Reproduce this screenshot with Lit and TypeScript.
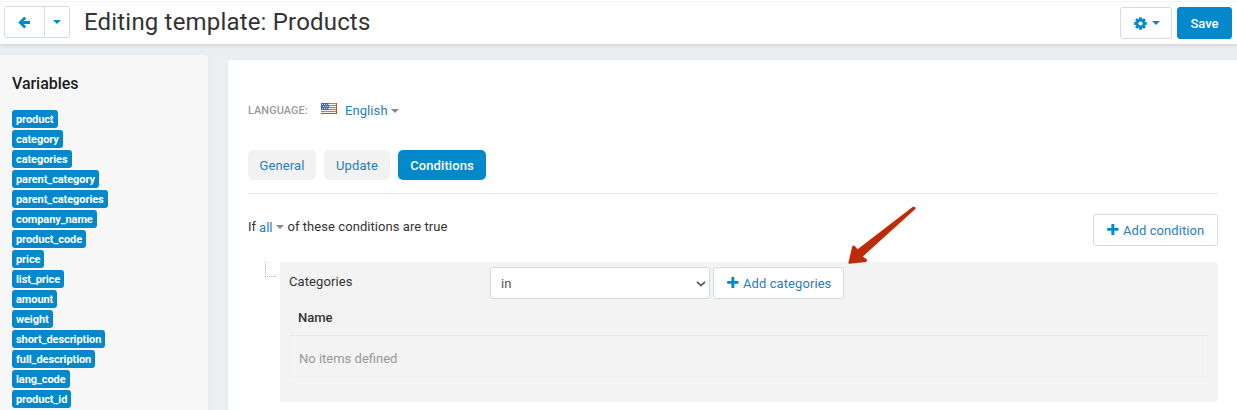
import { LitElement, html, css, svg } from "lit";
import { customElement } from "lit/decorators.js";

const variables = [
  "product", "category", "categories", "parent_category", "parent_categories",
  "company_name", "product_code", "price", "list_price", "amount", "weight",
  "short_description", "full_description", "lang_code", "product_id",
];

const plus = html`<svg class="plus" width="12" height="12" viewBox="0 0 12 12">
  <path d="M4.4 0h2.9v4h4.2v2.8H7.3v4.2H4.4V6.8H0.2V4h4.2z" fill="#0388cc" />
</svg>`;

const teeth = [0, 45, 90, 135].map(
  (a) => svg`<rect x="4.8" y="0.2" width="2.8" height="12" rx=".5" transform="rotate(${a} 6.2 6.2)"/>`
);

@customElement("app-root")
export class AppRoot extends LitElement {
  static styles = css`
    :host {
      display: block;
      height: 410px;
      overflow: hidden;
      position: relative;
      background: #ebeff2;
      font: 13px/20px Roboto, "Liberation Sans", sans-serif;
      color: #333;
      white-space: nowrap;
    }
    * { box-sizing: border-box; }
    svg { display: block; flex: none; }
    .header {
      height: 44px;
      display: flex;
      align-items: flex-start;
      padding: 6px 5px 0 4px;
      background: linear-gradient(#fff 1px, #f4f4f4 1px, #f4f4f4 2px, #fff 2px);
      box-shadow: 0 1px 5px rgba(0, 0, 0, 0.14);
      position: relative;
    }
    .btn {
      display: flex;
      align-items: center;
      height: 32px;
      border: 1px solid #d3dbe1;
      border-radius: 3px;
      background: #fff;
      color: #2a7dbb;
    }
    .back { width: 66px; }
    .back-arrow { width: 40px; height: 30px; border-right: 1px solid #d3dbe1; padding: 10px 0 0 13px; }
    .back-caret { padding-left: 8px; }
    .title { margin: 0 auto 0 14px; font-size: 24px; line-height: 32px; font-weight: 400; letter-spacing: 0.18px; }
    .tools { width: 52px; margin: 1px 5px 0 0; padding-left: 13px; gap: 5px; }
    .save {
      width: 55px;
      margin-top: 1px;
      padding-top: 1px;
      justify-content: center;
      border-color: #0388cc;
      background: #0388cc;
      color: #fff;
      font-weight: 500;
    }
    .body { display: flex; height: 366px; }
    .sidebar {
      width: 208px;
      height: 370px;
      margin-top: 11px;
      padding: 19px 12px 0;
      background: #f7f7f7;
      border-radius: 0 3px 0 0;
      box-shadow: 0 0 3px rgba(0, 0, 0, 0.05);
    }
    .sidebar-title { margin: 0 0 16px; font-size: 16px; line-height: 20px; font-weight: 500; color: #1c1c1c; letter-spacing: -0.05px; }
    .tags { display: flex; flex-direction: column; align-items: flex-start; gap: 2px; }
    .tag {
      height: 18px;
      padding: 0 4px;
      border-radius: 3px;
      background: #0388cc;
      color: #fff;
      font-size: 11px;
      line-height: 19px;
      font-weight: 700;
      letter-spacing: -0.08px;
    }
    .main {
      width: 1009px;
      height: 370px;
      margin: 16px 0 0 20px;
      padding: 41px 19px 0 20px;
      background: #fff;
      border-radius: 3px 0 0 0;
      box-shadow: 0 0 3px rgba(0, 0, 0, 0.05);
    }
    .language { display: flex; align-items: center; height: 20px; }
    .language-label { width: 73px; font-size: 11px; font-weight: 500; color: #999; }
    .flag { margin-top: -5px; }
    .link { color: #2a7dbb; }
    .language-link { margin: 0 3px 0 8px; letter-spacing: 0.08px; }
    .tabs { display: flex; gap: 8px; margin-top: 29px; }
    .tab {
      display: flex;
      justify-content: center;
      height: 30px;
      line-height: 31px;
      border-radius: 5px;
      background: #f2f2f2;
      color: #2a7dbb;
      letter-spacing: 0.08px;
    }
    .general { width: 68px; }
    .update { width: 66px; }
    .active { width: 88px; background: #0388cc; color: #fff; font-weight: 500; }
    .rule { height: 1px; margin-top: 13px; background: #e1e5e8; }
    .condition-head { display: flex; justify-content: space-between; padding-top: 20px; }
    .sentence { display: flex; align-items: center; height: 26px; }
    .all { margin: 1px 4px 0 3px; }
    .of { margin-left: 3px; letter-spacing: 0.06px; }
    .add-condition { width: 125px; padding: 0 0 0 13px; gap: 4px; }
    .add-label { padding-top: 2px; letter-spacing: 0.08px; }
    .tree { display: flex; margin-top: 16px; padding-left: 17px; }
    .elbow { width: 11px; height: 15px; margin-right: 4px; border: dotted #b5b5b5; border-width: 0 0 1px 1px; }
    .group { width: 938px; height: 140px; padding: 5px 10px 0; border-radius: 3px; background: #f3f3f3; }
    .controls { display: flex; }
    .name { width: 201px; margin-left: -1px; padding: 5px 0 0; line-height: 20px; letter-spacing: 0.1px; }
    .select { width: 220px; margin-right: 3px; justify-content: space-between; padding: 1px 3px 0 10px; color: #555; }
    .add-categories { width: 131px; padding-left: 13px; gap: 4px; }
    .table-head { height: 37px; padding: 9px 8px 0; border-bottom: 1px solid #e8e8e8; font-weight: 500; }
    .empty { height: 41px; padding: 13px 8px 0; border: 1px solid #f0f0f0; border-top: 0; color: #999; }
    .pointer { position: absolute; left: 840px; top: 200px; }
  `;

  private caret(color: string) {
    return html`<svg width="8" height="4" viewBox="0 0 8 4"><path d="M0 0h8L4 4z" fill=${color} /></svg>`;
  }

  private flag() {
    return html`<svg class="flag" width="16" height="11" viewBox="0 0 16 11">
      <path d="M0 0h16v11H0z" fill="#fbeeea" />
      <path d="M0 .5h16M0 2.5h16M0 4.5h16M0 6.5h16M0 8.5h16" stroke="#e2685c" />
      <path d="M0 10.5h16M15.5 0v11" stroke="#c4473f" />
      <path d="M0 0h8v7H0z" fill="#3e6bcb" />
      <path d="M1 1.5h7M2 3.5h6M1 5.5h7" stroke="#c4d3f5" stroke-dasharray="1 1" />
    </svg>`;
  }

  render() {
    return html`
      <header class="header">
        <div class="btn back">
          <span class="back-arrow">
            <svg width="13" height="12" viewBox="0 0 13 12">
              <path d="M7.2 .6 2.2 5.5 7.2 10.4M2.6 5.5H12" fill="none" stroke="#0388cc" stroke-width="2.8" />
            </svg>
          </span>
          <span class="back-caret">${this.caret("#0388cc")}</span>
        </div>
        <h1 class="title">Editing template: Products</h1>
        <div class="btn tools">
          <svg width="13" height="13" viewBox="0 0 12.4 12.4" fill="#0388cc">
            ${teeth}
            <circle cx="6.2" cy="6.2" r="4.5" />
            <circle cx="6.2" cy="6.2" r="2" fill="#fff" />
          </svg>
          ${this.caret("#0388cc")}
        </div>
        <div class="btn save">Save</div>
      </header>
      <div class="body">
        <aside class="sidebar">
          <h2 class="sidebar-title">Variables</h2>
          <div class="tags">${variables.map((v) => html`<span class="tag">${v}</span>`)}</div>
        </aside>
        <main class="main">
          <div class="language">
            <span class="language-label">LANGUAGE:</span>
            ${this.flag()}
            <span class="link language-link">English</span>${this.caret("#888")}
          </div>
          <nav class="tabs">
            <span class="tab general">General</span>
            <span class="tab update">Update</span>
            <span class="tab active">Conditions</span>
          </nav>
          <div class="rule"></div>
          <div class="condition-head">
            <div class="sentence">
              <span>If</span><span class="link all">all</span>${this.caret("#888")}
              <span class="of">of these conditions are true</span>
            </div>
            <div class="btn add-condition">${plus}<span class="add-label">Add condition</span></div>
          </div>
          <div class="tree">
            <div class="elbow"></div>
            <section class="group">
              <div class="controls">
                <span class="name">Categories</span>
                <div class="btn select">
                  <span>in</span>
                  <svg width="10" height="6" viewBox="0 0 10 6">
                    <path d="M1 .8 5 4.6 9 .8" fill="none" stroke="#555" stroke-width="1.7" />
                  </svg>
                </div>
                <div class="btn add-categories">${plus}<span class="add-label">Add categories</span></div>
              </div>
              <div class="table-head">Name</div>
              <div class="empty">No items defined</div>
            </section>
          </div>
        </main>
      </div>
      <svg class="pointer" width="80" height="70" viewBox="840 200 80 70">
        <path
          d="M848.4 262.6 852.3 246.2Q853.5 244.8 855 246.3L857.6 249.2 912.6 207Q915.6 205.8 915.6 208.8L862.9 256.4 866.9 259.5Q867.5 261.4 865.7 261.9L849.6 263.8Q848.3 263.9 848.4 262.6Z"
          fill="#bd2b07"
        />
      </svg>
    `;
  }
}
